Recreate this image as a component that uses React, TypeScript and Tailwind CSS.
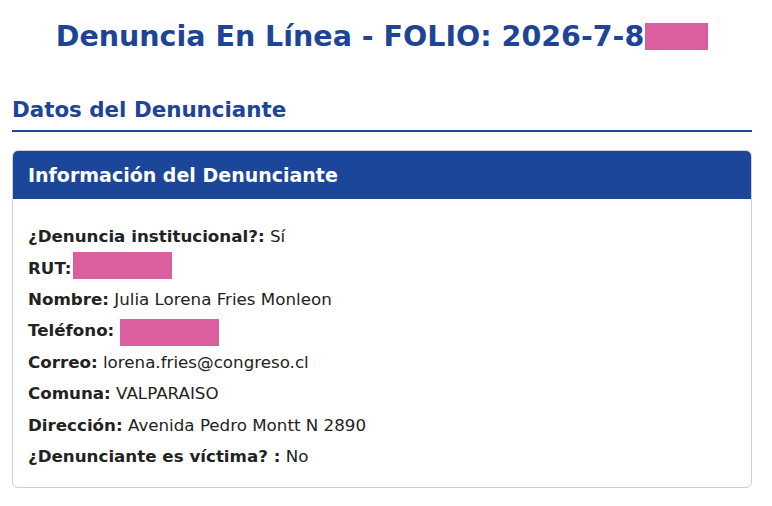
const rows: { label: string; value?: string; redacted?: "rut" | "phone" }[] = [
  { label: "¿Denuncia institucional?:", value: "Sí" },
  { label: "RUT:", redacted: "rut" },
  { label: "Nombre:", value: "Julia Lorena Fries Monleon" },
  { label: "Teléfono:", redacted: "phone" },
  { label: "Correo:", value: "lorena.fries@congreso.cl" },
  { label: "Comuna:", value: "VALPARAISO" },
  { label: "Dirección:", value: "Avenida Pedro Montt N 2890" },
  { label: "¿Denunciante es víctima? :", value: "No" },
];

export default function App() {
  return (
    <div
      className="h-[506px] w-[772px] bg-white pl-3 pr-5 text-[#222]"
      style={{ fontFamily: '"DejaVu Sans", sans-serif' }}
    >
      <h1 className="pt-[17px] text-center text-[28.5px] font-bold leading-[40px] text-[#1d4495]">
        Denuncia En Línea - FOLIO: 2026-7-8
        <span className="ml-px inline-block h-[27px] w-[63px] translate-y-[4px] bg-[#db5f9f] align-baseline" />
      </h1>

      <h2 className="mt-[38px] border-b-2 border-[#1d4495] pb-[5px] text-[21.4px] font-bold leading-[30px] text-[#1d4495]">
        Datos del Denunciante
      </h2>

      <div className="mt-[18px] overflow-hidden rounded-[6px] border border-[#cfcfcf]">
        <div className="flex h-[48px] items-center bg-[#1c4699] px-[15px] text-[19px] font-bold text-white">
          Información del Denunciante
        </div>
        <div className="px-[15px] pt-[22px] pb-[15px] text-[16.7px]">
          {rows.map((r) => (
            <div key={r.label} className="flex h-[31.4px] items-center whitespace-pre">
              <span className="font-bold">{r.label}</span>
              {r.redacted === "rut" && (
                <span className="ml-px inline-block h-[27px] w-[99px] -translate-y-[3px] bg-[#db5f9f]" />
              )}
              {r.redacted === "phone" && (
                <span className="ml-[6px] inline-block h-[27px] w-[99px] translate-y-[2px] bg-[#db5f9f]" />
              )}
              {!r.redacted && <span> {r.value}</span>}
            </div>
          ))}
        </div>
      </div>
    </div>
  );
}
